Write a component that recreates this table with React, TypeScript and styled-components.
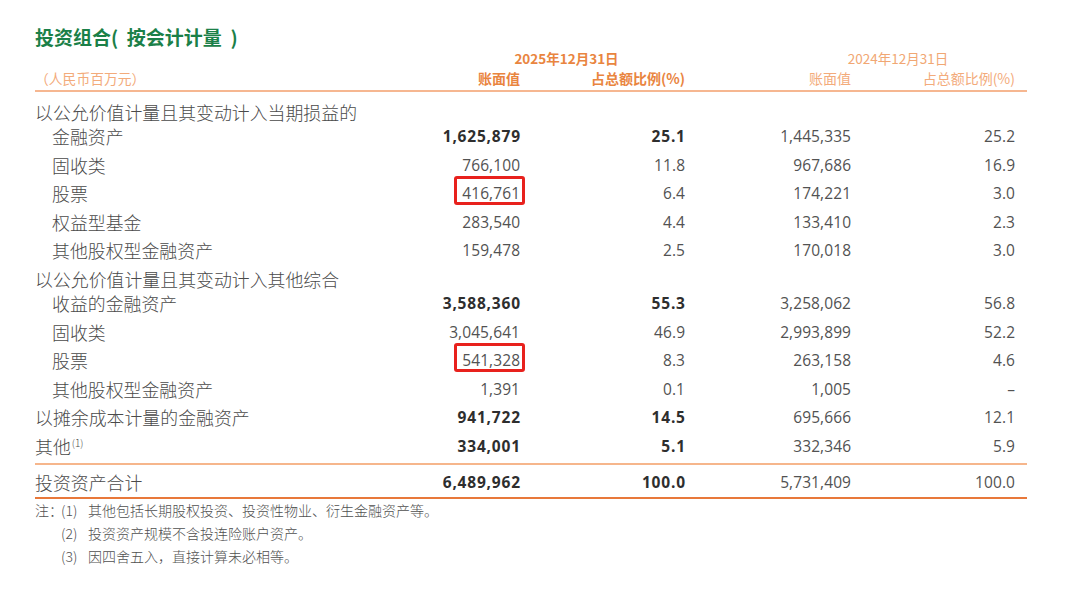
import React from 'react';
import styled, { createGlobalStyle } from 'styled-components';

const GlobalStyle = createGlobalStyle`
  html, body { margin: 0; padding: 0; background: #ffffff; }
  body { font-family: "Noto Sans CJK SC", "Noto Sans", sans-serif; }
`;

const Page = styled.div`
  width: 1080px;
  height: 594px;
  box-sizing: border-box;
  padding: 25px 53px 0 35px;
  overflow: hidden;
`;

const Title = styled.h1`
  margin: 0;
  font-size: 19px;
  line-height: 24px;
  font-weight: 700;
  color: #1b8048;
  white-space: pre;
`;

const Table = styled.div`
  width: 992px;
`;

const Grid = styled.div`
  display: grid;
  grid-template-columns: 1fr 100px 165px 166px 164px;
  padding-right: 12px;
`;

const YearRow = styled(Grid)`
  margin-top: 1px;
  height: 16px;
  line-height: 16px;
  font-size: 13.5px;
`;

const YearCell = styled.div<{ $current?: boolean; $start: number; $shift: number }>`
  grid-column: ${(p) => p.$start} / span 2;
  text-align: center;
  padding-left: ${(p) => p.$shift}px;
  color: ${(p) => (p.$current ? '#e9853f' : '#f1a773')};
  font-weight: ${(p) => (p.$current ? 700 : 400)};
`;

const HeadRow = styled(Grid)`
  margin-top: 3px;
  line-height: 18px;
  padding-bottom: 3px;
  border-bottom: 2px solid #f6b791;
  font-size: 14px;
`;

const HeadCell = styled.div<{ $current?: boolean; $unit?: boolean }>`
  text-align: ${(p) => (p.$unit ? 'left' : 'right')};
  font-size: ${(p) => (p.$unit ? '13.8px' : '14px')};
  color: ${(p) => (p.$current ? '#e9853f' : '#f3ab7b')};
  font-weight: ${(p) => (p.$current ? 700 : 400)};
  white-space: nowrap;
`;

const Body = styled.div`
  padding-top: 8px;
`;

const Row = styled(Grid)<{ $group?: boolean }>`
  line-height: 24px;
  padding-bottom: ${(p) => (p.$group ? '0' : '4.6px')};
`;

const Label = styled.div<{ $indent?: boolean }>`
  padding-left: ${(p) => (p.$indent ? '17px' : '0')};
  font-size: 17.9px;
  font-weight: 300;
  color: #4a4a4a;
  white-space: nowrap;
`;

const GroupLabel = styled(Label)`
  grid-column: 1 / -1;
`;

const Sup = styled.span`
  font-size: 10px;
  vertical-align: 7px;
  line-height: 0;
  margin-left: 1px;
`;

const Num = styled.div<{ $bold?: boolean }>`
  text-align: right;
  font-family: "Open Sans", "Noto Sans", sans-serif;
  font-size: 15.5px;
  font-weight: ${(p) => (p.$bold ? 700 : 400)};
  color: ${(p) => (p.$bold ? '#2e2e2e' : '#525252')};
  letter-spacing: ${(p) => (p.$bold ? '0.8px' : '0.1px')};
  margin-right: ${(p) => (p.$bold ? '-0.8px' : '-0.1px')};
`;

const Boxed = styled.span`
  position: relative;
  display: inline-block;
  &::after {
    content: '';
    position: absolute;
    left: -8px;
    right: -5px;
    top: -5px;
    bottom: 0;
    border: 3.5px solid #e8211d;
    border-radius: 3px;
  }
`;

const TotalRow = styled(Grid)`
  line-height: 24px;
  border-top: 2px solid #f6b68c;
  border-bottom: 2px solid #e8783a;
  padding-top: 5.5px;
  padding-bottom: 2.5px;
`;

const Notes = styled.div`
  display: grid;
  grid-template-columns: 26px 27px 1fr;
  font-size: 14px;
  font-weight: 300;
  line-height: 23px;
  color: #505050;
  white-space: nowrap;
`;

type RowData = {
  label: string;
  group?: boolean;
  indent?: boolean;
  bold?: boolean;
  boxed?: boolean;
  sup?: string;
  v?: string[];
};

const rows: RowData[] = [
  { label: '以公允价值计量且其变动计入当期损益的', group: true },
  { label: '金融资产', indent: true, bold: true, v: ['1,625,879', '25.1', '1,445,335', '25.2'] },
  { label: '固收类', indent: true, v: ['766,100', '11.8', '967,686', '16.9'] },
  { label: '股票', indent: true, boxed: true, v: ['416,761', '6.4', '174,221', '3.0'] },
  { label: '权益型基金', indent: true, v: ['283,540', '4.4', '133,410', '2.3'] },
  { label: '其他股权型金融资产', indent: true, v: ['159,478', '2.5', '170,018', '3.0'] },
  { label: '以公允价值计量且其变动计入其他综合', group: true },
  { label: '收益的金融资产', indent: true, bold: true, v: ['3,588,360', '55.3', '3,258,062', '56.8'] },
  { label: '固收类', indent: true, v: ['3,045,641', '46.9', '2,993,899', '52.2'] },
  { label: '股票', indent: true, boxed: true, v: ['541,328', '8.3', '263,158', '4.6'] },
  { label: '其他股权型金融资产', indent: true, v: ['1,391', '0.1', '1,005', '–'] },
  { label: '以摊余成本计量的金融资产', bold: true, v: ['941,722', '14.5', '695,666', '12.1'] },
  { label: '其他', sup: '(1)', bold: true, v: ['334,001', '5.1', '332,346', '5.9'] },
];

const notes = [
  ['注：', '(1)', '其他包括长期股权投资、投资性物业、衍生金融资产等。'],
  ['', '(2)', '投资资产规模不含投连险账户资产。'],
  ['', '(3)', '因四舍五入，直接计算未必相等。'],
];

export default function App() {
  return (
    <>
      <GlobalStyle />
      <Page>
        <Title>{'投资组合(  按会计计量  )'}</Title>
        <Table>
          <YearRow>
            <YearCell $current $start={2} $shift={28}>2025年12月31日</YearCell>
            <YearCell $start={4} $shift={96}>2024年12月31日</YearCell>
          </YearRow>
          <HeadRow>
            <HeadCell $unit>（人民币百万元）</HeadCell>
            <HeadCell $current>账面值</HeadCell>
            <HeadCell $current>占总额比例(%)</HeadCell>
            <HeadCell>账面值</HeadCell>
            <HeadCell>占总额比例(%)</HeadCell>
          </HeadRow>
          <Body>
            {rows.map((r, i) =>
              r.group ? (
                <Row key={i} $group>
                  <GroupLabel>{r.label}</GroupLabel>
                </Row>
              ) : (
                <Row key={i}>
                  <Label $indent={r.indent}>
                    {r.label}
                    {r.sup && <Sup>{r.sup}</Sup>}
                  </Label>
                  <Num $bold={r.bold}>{r.boxed ? <Boxed>{r.v![0]}</Boxed> : r.v![0]}</Num>
                  <Num $bold={r.bold}>{r.v![1]}</Num>
                  <Num>{r.v![2]}</Num>
                  <Num>{r.v![3]}</Num>
                </Row>
              )
            )}
          </Body>
          <TotalRow>
            <Label>投资资产合计</Label>
            <Num $bold>6,489,962</Num>
            <Num $bold>100.0</Num>
            <Num>5,731,409</Num>
            <Num>100.0</Num>
          </TotalRow>
        </Table>
        <Notes>
          {notes.map((n, i) => (
            <React.Fragment key={i}>
              <span>{n[0]}</span>
              <span>{n[1]}</span>
              <span>{n[2]}</span>
            </React.Fragment>
          ))}
        </Notes>
      </Page>
    </>
  );
}
